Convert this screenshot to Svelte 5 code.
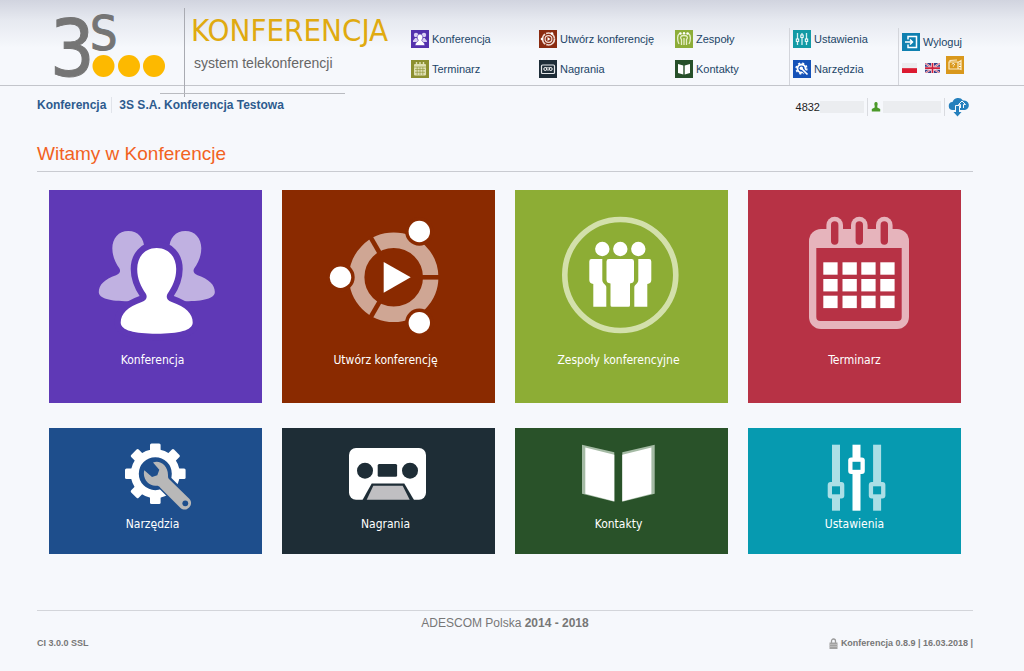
<script>
  const menu = [
    { id: 'people', label: 'Konferencja', color: '#5432ad' },
    { id: 'calendar', label: 'Terminarz', color: '#8c9030' },
    { id: 'create', label: 'Utwórz konferencję', color: '#8a2b10' },
    { id: 'tape', label: 'Nagrania', color: '#1e2d38' },
    { id: 'teams', label: 'Zespoły', color: '#8dad38' },
    { id: 'book', label: 'Kontakty', color: '#27502a' }
  ]

  const adminMenu = [
    { id: 'sliders', label: 'Ustawienia', color: '#129aa5' },
    { id: 'gear', label: 'Narzędzia', color: '#1552b8' }
  ]

  const tiles = [
    { id: 'people', label: 'Konferencja', color: '#5f39b6' },
    { id: 'create', label: 'Utwórz konferencję', color: '#8a2a00' },
    { id: 'teams', label: 'Zespoły konferencyjne', color: '#8dad35' },
    { id: 'calendar', label: 'Terminarz', color: '#b73245' },
    { id: 'gear', label: 'Narzędzia', color: '#1e4e8c', small: true },
    { id: 'tape', label: 'Nagrania', color: '#1e2d36', small: true },
    { id: 'book', label: 'Kontakty', color: '#295229', small: true },
    { id: 'sliders', label: 'Ustawienia', color: '#069ab0', small: true }
  ]

  const person = 'M107.7 58c-12 0-19.5 9-19.5 21 0 10 4 18 8.500 24.500 2 3.500 1 6.500-4 8.500-14 5-21 11.500-21 20.500 0 8 14 11.200 36 11.200s36-3.200 36-11.200c0-9-7-15.500-21-20.500-5-2-6-5-4-8.500 4.500-6.500 8.500-14.500 8.500-24.500 0-12-7.500-21-19.500-21z'
  const side = 'M76.5 69h10.800v21c0 4 4 4 4 7.500v19.200H78.300V94q-4-.5-4-4V71.400q0-2.400 2.200-2.400z'
  const teeth = [0, 45, 90, 135, 180, 225, 270, 315]
</script>

{#snippet miniIcon(id, color)}
  <svg class="mini" viewBox="0 0 18 18" style="background: {color}" aria-hidden="true">
    {#if id === 'people'}
      <g fill="#d9d0f2">
        <circle cx="5" cy="5" r="2.200" /><path d="M2 12c0-3 1.500-2 2-4h2c0 2 2 1 2 4z" />
        <circle cx="13" cy="5" r="2.200" /><path d="M10 12c0-3 2-2 2-4h2c0 2 2 1 2 4z" />
      </g>
      <g fill="#fff" stroke={color} stroke-width=".6">
        <path d="M9 4a3 3.400 0 0 0-1.800 6c.4 2-3 1.500-3 5.500h9.600c0-4-3.400-3.500-3-5.500A3 3.400 0 0 0 9 4z" />
      </g>
    {:else if id === 'calendar'}
      <rect x="3" y="4" width="12" height="11.500" rx="1" fill="#dfe0b4" />
      <path d="M5.500 2v3M9 2v3M12.500 2v3" stroke="#dfe0b4" stroke-width="1.400" />
      <path d="M3 7h12M4 9.500h10M4 12.300h10M6.200 7v8M9 7v8M11.800 7v8" stroke={color} stroke-width=".6" />
    {:else if id === 'create'}
      <g fill="none" stroke="#f1dcd5">
        <circle cx="9.500" cy="9" r="6" stroke-width="1.600" stroke-dasharray="11.500 1" />
        <circle cx="9.500" cy="9" r="3.400" stroke-width="1.200" />
      </g>
      <path d="M8.500 7l3 2-3 2z" fill="#fff" />
      <circle cx="3" cy="9" r="1.300" fill="#fff" />
      <circle cx="13" cy="3.500" r="1.300" fill="#fff" />
    {:else if id === 'tape'}
      <rect x="2.500" y="5" width="13" height="8.500" rx="1" fill="none" stroke="#e4e7e9" stroke-width="1.200" />
      <circle cx="6.300" cy="9" r="1.500" fill="none" stroke="#fff" />
      <circle cx="11.700" cy="9" r="1.500" fill="none" stroke="#fff" />
      <path d="M6.500 7.800h5M8 10h2" stroke="#fff" stroke-width=".8" />
    {:else if id === 'teams'}
      <g fill="none" stroke="#e6efc8" stroke-width="1.300">
        <path d="M5 3C2 5 2 10 4 14M13 3c3 2 3 7 1 11M6.500 15V9.500C4.500 7 6 5.500 9 5.500s4.500 1.500 2.500 4V15M9 8v7" />
      </g>
      <g fill="#fff">
        <circle cx="5.500" cy="3.500" r="1.200" /><circle cx="9" cy="3.300" r="1.200" /><circle cx="12.500" cy="3.500" r="1.200" />
      </g>
    {:else if id === 'book'}
      <path d="M3 4l5.300 1.600v9L3 13zM15 4L9.700 5.600v9L15 13z" fill="#fff" />
    {:else if id === 'sliders'}
      <path d="M4.500 3v12M9 3v12M13.500 3v12" stroke="#d5f0f2" stroke-width="1.300" />
      <g fill={color} stroke="#fff">
        <rect x="3.300" y="9" width="2.400" height="2.400" />
        <rect x="7.800" y="5" width="2.400" height="2.400" />
        <rect x="12.300" y="9" width="2.400" height="2.400" />
      </g>
    {:else if id === 'gear'}
      <circle cx="8.500" cy="8.500" r="4" fill="none" stroke="#fff" stroke-width="1.800" />
      <circle cx="8.500" cy="8.500" r="5.400" fill="none" stroke="#fff" stroke-width="1.400" stroke-dasharray="2.120 2.120" />
      <path d="M8 8l6.500 6.500" stroke={color} stroke-width="3.400" />
      <path d="M8 8l6.500 6.500" stroke="#fff" stroke-width="1.700" />
      <circle cx="8.300" cy="8.300" r="1.700" fill="#fff" />
    {:else if id === 'logout'}
      <path d="M6 6.500V3.500h8.500v11H6v-3" fill="none" stroke="#fff" stroke-width="1.500" />
      <path d="M3 9h7M8 6.500L10.500 9 8 11.500" fill="none" stroke="#fff" stroke-width="1.500" />
    {:else if id === 'help'}
      <path d="M3 6h9v7H3zM4 6V4.500l7-.5M12 6.500l3-2v9l-3-1" fill="none" stroke="#fbe9c3" stroke-width="1.200" />
      <path d="M6 8.500c0-1.300 2.500-1.300 2.500 0 0 1-1.200.8-1.200 2M13 8h2M13 10.500h2" fill="none" stroke="#fff" />
    {/if}
  </svg>
{/snippet}

{#snippet tileIcon(id, color)}
  {#if id === 'people'}
    <g fill="#c0b1e1">
      <path d={person} transform="translate(-9 -6.600) scale(.82)" />
      <path d={person} transform="translate(48 -6.600) scale(.82)" />
    </g>
    <path d={person} fill={color} stroke={color} stroke-width="13" />
    <path d={person} fill="#fff" />
  {:else if id === 'create'}
    <circle cx="111.700" cy="87.300" r="37" fill="none" stroke="#cfa694" stroke-width="15.400" />
    <g stroke={color} stroke-width="4.600">
      {#each [0, 120, 240] as angle}
        <path d="M136 87.300h23" transform="rotate({angle} 111.700 87.300)" />
      {/each}
    </g>
    <g fill="#fff" stroke={color} stroke-width="7" paint-order="stroke">
      <circle cx="137.300" cy="41.500" r="10.700" />
      <circle cx="58.500" cy="87.300" r="10.700" />
      <circle cx="137.300" cy="132.800" r="10.700" />
    </g>
    <path d="M101.700 72l27 15.300-27 15.400z" fill="#fff" />
  {:else if id === 'teams'}
    <circle cx="105.300" cy="85" r="55.500" fill="none" stroke="#d3e0ab" stroke-width="5.600" />
    <g fill="#fff">
      <circle cx="87.300" cy="59" r="7.200" />
      <circle cx="105.300" cy="59" r="7.200" />
      <circle cx="123.300" cy="59" r="7.200" />
      <path d="M94 69h22.600q2.400 0 2.400 2.400V90q0 3-4 3.500v21.700q0 1.500-1.500 1.500H97q-1.500 0-1.500-1.500V93.500q-4-.5-4-3.500V71.400q0-2.400 2.500-2.400z" />
      <path d={side} />
      <path d={side} transform="translate(210.600 0) scale(-1 1)" />
    </g>
  {:else if id === 'calendar'}
    <g fill="#e6b4bc">
      <rect x="61" y="39" width="100" height="100" rx="12" />
      {#each [86.7, 111.3, 136.3] as x}
        <rect x={x - 8.3} y="26.700" width="16.600" height="30" rx="8.300" />
      {/each}
    </g>
    <path d="M68.300 58h85.400v69q0 4-4 4H72.300q-4 0-4-4z" fill={color} />
    {#each [86.7, 111.3, 136.3] as x}
      <rect x={x - 3.7} y="31.300" width="7.400" height="23.400" rx="3.700" fill={color} />
    {/each}
    {#each [72.3, 89, 105.7] as y}
      {#each [75.3, 94.5, 113.3, 132.3] as x}
        <rect {x} {y} width="14.300" height="12.400" fill="#fff" />
      {/each}
    {/each}
  {:else if id === 'gear'}
    <circle cx="106.300" cy="45.700" r="20.500" fill="none" stroke="#fff" stroke-width="8" />
    {#each teeth as angle}
      <rect x="101" y="15.400" width="10.600" height="10" rx="1.500" fill="#fff" transform="rotate({angle} 106.300 45.700)" />
    {/each}
    <path d="M116 55l21 21" stroke={color} stroke-width="16" />
    <path
      d="M104 34.500c6-3 15 2 15 12.500 0 2 0 3 1 4l20.500 20c5 6-3 14-9 9L111.500 60c-1.500-2-2.500-2.300-4.500-2.200-7 .5-14-7-11.700-15.600l7.700 6.800 5.300-1.700 2-5.500z"
      fill="#b8b8b8"
    />
    <circle cx="136.300" cy="75.300" r="2.900" fill={color} />
  {:else if id === 'tape'}
    <rect x="67" y="20" width="77" height="51.700" rx="7" fill="#fff" />
    <g fill={color}>
      <circle cx="83" cy="42.700" r="8" />
      <circle cx="128" cy="42.700" r="8" />
      <rect x="95.700" y="36" width="19.400" height="12.800" rx="1.500" />
      <path d="M89.700 55.500h32.600l9.700 16.400H80.500z" />
    </g>
    <path d="M91.300 57.700h29.400l7 14H84.700z" fill="#c0bfc2" />
  {:else if id === 'book'}
    <path d="M67 16.700l32.300 7.600v49.400l-32.300-8zM139.700 16.700l-32.400 7.600v49.400l32.400-8z" fill="#a5bba5" />
    <path d="M70.300 19.500l29 7.200v46.600l-29-7.600zM136.400 19.500l-29.100 7.200v46.600l29.100-7.600z" fill="#fff" />
  {:else if id === 'sliders'}
    {#each [[88, 54, '#abdfe6'], [108.5, 29.5, '#fff'], [129.1, 54, '#abdfe6']] as [x, y, fill]}
      <rect x={x - 4} y="16.700" width="8" height="66" {fill} />
      <rect x={x - 8.3} {y} width="16.600" height="16.600" rx="3" {fill} />
      <rect x={x - 4} y={y + 4.3} width="8" height="8" fill={color} />
    {/each}
  {/if}
{/snippet}

<header class="header">
  <div class="brand">
    <svg class="logo" viewBox="-6 -8 122 104" role="img" aria-label="3S">
      <text x="-5" y="68" class="logo-three">3</text>
      <text x="35" y="42" class="logo-s">S</text>
      <g fill="#fdb900">
        <circle cx="48.500" cy="58" r="11" />
        <circle cx="74" cy="58" r="11" />
        <circle cx="99" cy="58" r="11" />
      </g>
    </svg>
    <div class="brand-name">
      <strong>KONFERENCJA</strong>
      <span>system telekonferencji</span>
    </div>
  </div>

  <nav class="menu">
    {#each menu as item}
      <a href="#/{item.id}">{@render miniIcon(item.id, item.color)}{item.label}</a>
    {/each}
  </nav>
  <nav class="menu admin">
    {#each adminMenu as item}
      <a href="#/{item.id}">{@render miniIcon(item.id, item.color)}{item.label}</a>
    {/each}
  </nav>
  <div class="session">
    <a href="#/logout">{@render miniIcon('logout', '#0f80b0')}Wyloguj</a>
    <div class="langs">
      <button type="button" aria-label="Polski">
        <svg viewBox="0 0 16 11">
          <path d="M0 0h16v6H0z" fill="#ececef" /><path d="M0 5.500h16V11H0z" fill="#dc1a30" />
        </svg>
      </button>
      <button type="button" aria-label="English">
        <svg viewBox="0 0 16 11">
          <path d="M0 0h16v11H0z" fill="#35408a" />
          <path d="M0 0l16 11M16 0L0 11" stroke="#f3e6ee" stroke-width="2" />
          <path d="M0 0l16 11M16 0L0 11" stroke="#d0344c" stroke-width=".8" />
          <path d="M8 0v11M0 5.500h16" stroke="#f6eef2" stroke-width="3.200" />
          <path d="M8 0v11M0 5.500h16" stroke="#d0203c" stroke-width="1.800" />
        </svg>
      </button>
      <a class="help" href="#/help" aria-label="Pomoc">{@render miniIcon('help', '#d9981c')}</a>
    </div>
  </div>
</header>

<div class="bar">
  <div class="crumbs">
    <a href="#/">Konferencja</a>
    <a href="#/company">3S S.A. Konferencja Testowa</a>
  </div>
  <div class="status">
    <div class="cell">4832<span class="blank short"></span></div>
    <div class="cell">
      <svg class="user" viewBox="0 0 10 10" aria-hidden="true">
        <path d="M5 0C3.200 0 3 2 3.700 4v1.500L.8 7v2.500h8.400V7L6.300 5.500V4C7 2 6.800 0 5 0z" fill="#4c9a2a" />
      </svg>
      <span class="blank"></span>
    </div>
    <div class="cell">
      <a class="cloud" href="#/download" aria-label="Pobierz">
        <svg viewBox="0 0 22 20">
          <path d="M5 13a4 4 0 0 1-.5-8A6 6 0 0 1 15 3.500 4.800 4.800 0 0 1 17 13z" fill="#2580bd" />
          <path d="M8 8.500h3V15h2.500l-4 4.500-4-4.500H8z" fill="#2580bd" />
          <path d="M7.500 14V8.500h4V14M12.500 11V7.500h-2L14 4l3.500 3.500h-2V11" fill="none" stroke="#f6f8fc" />
        </svg>
      </a>
    </div>
  </div>
</div>

<main>
  <h1>Witamy w Konferencje</h1>
  <div class="tiles">
    {#each tiles as tile}
      <a class="tile" class:small={tile.small} href="#/{tile.id}" style="background: {tile.color}">
        <svg viewBox={tile.small ? '0 0 213 86' : '0 0 213 160'} aria-hidden="true">
          {@render tileIcon(tile.id, tile.color)}
        </svg>
        <span>{tile.label}</span>
      </a>
    {/each}
  </div>
</main>

<footer>
  <p>ADESCOM Polska <strong>2014 - 2018</strong></p>
  <div class="versions">
    <span>CI 3.0.0 SSL</span>
    <span>
      <svg class="lock" viewBox="0 0 9 11" aria-hidden="true">
        <path d="M2.500 5V3a2 2 0 0 1 4 0v2" fill="none" stroke="#999" stroke-width="1.300" />
        <path d="M.5 4.500h8V11h-8z" fill="#a2a2a2" />
        <path d="M.5 6.500h8M.5 8.500h8" stroke="#c4c4c4" stroke-width=".7" />
      </svg>
      Konferencja 0.8.9 | 16.03.2018 |
    </span>
  </div>
</footer>

<style>
:global(body) {
	margin: 0;
	background: #f6f8fc;
	font-family: "Liberation Sans", Arial, sans-serif;
	font-size: 12px;
	color: #666;
}

a {
	color: inherit;
	text-decoration: none;
}

svg {
	display: block;
}

.header {
	display: flex;
	height: 85px;
	border-bottom: 1px solid #c3c5cb;
	background: linear-gradient(#d1d4df, #e6e9f0 20px, #f6f8fc 48px);
}

.brand {
	display: flex;
	flex: none;
	width: 362px;
	padding-left: 49px;
}

.logo {
	flex: none;
	width: 122px;
	height: 104px;
	margin-right: 13px;
}

.logo-three,
.logo-s {
	font-family: "DejaVu Sans Condensed", "DejaVu Sans", sans-serif;
	fill: #757575;
	stroke: #757575;
}

.logo-three {
	font-size: 78px;
}

.logo-s {
	font-size: 48px;
}

.brand-name {
	position: relative;
	padding: 10px 0 0 7px;
}

.brand-name::before {
	content: '';
	position: absolute;
	left: 0;
	top: 8px;
	height: 89px;
	border-left: 1px solid #a9abb2;
}

.brand-name::after {
	content: '';
	position: absolute;
	left: -24px;
	top: 93px;
	width: 185px;
	border-top: 1px solid #b9bbc0;
}

.brand-name strong {
	display: block;
	font-family: "DejaVu Sans Condensed", "DejaVu Sans", sans-serif;
	font-size: 31px;
	font-weight: 400;
	line-height: 40px;
	color: #e0aa10;
}

.brand-name span {
	display: block;
	padding: 2px 0 0 3px;
	font-size: 14px;
	line-height: 22px;
}

.menu {
	display: grid;
	flex: 1;
	grid-template: 18px 18px / 128fr 136fr 114fr;
	grid-auto-flow: column;
	row-gap: 12px;
	padding-top: 30px;
}

.menu a,
.session > a {
	display: flex;
	align-items: center;
	gap: 3px;
	font-size: 11px;
	color: #1c4567;
	white-space: nowrap;
}

.mini {
	flex: none;
	width: 18px;
	height: 18px;
}

.menu.admin {
	flex: none;
	grid-template-columns: 105px;
	padding: 2px 0 0 3px;
	margin-top: 28px;
	border-left: 1px solid #d3d5db;
}

.session {
	flex: none;
	width: 122px;
	margin-top: 28px;
	padding: 5px 0 0 3px;
	border-left: 1px solid #d3d5db;
}

.langs {
	display: flex;
	align-items: center;
	gap: 8px;
	height: 32px;
}

.langs button {
	width: 15px;
	margin: 2px 0 0;
	padding: 0;
	border: 0;
	background: none;
	cursor: pointer;
}

.langs .help {
	margin: -4px 0 0 -2px;
}

.bar {
	display: flex;
	justify-content: space-between;
	height: 38px;
	margin: 0 51px 0 37px;
}

.crumbs {
	display: flex;
	align-items: flex-start;
	padding-top: 11px;
	font-weight: bold;
	line-height: 16px;
	color: #2d5b8e;
}

.crumbs a + a {
	margin-left: 5px;
	padding-left: 7px;
	border-left: 1px solid #e1e4ea;
}

.status {
	display: flex;
	padding: 12px 3px 0 0;
	font-size: 11px;
	line-height: 18px;
	color: #222;
}

.cell {
	display: flex;
	align-items: center;
	gap: 2px;
	height: 18px;
}

.cell + .cell {
	margin-left: 3px;
	padding-left: 3px;
	border-left: 1px solid #d9dbe0;
}

.blank {
	width: 58px;
	height: 12px;
	background: #ebedf0;
}

.blank.short {
	width: 44px;
	margin-left: -2px;
}

.user {
	width: 10px;
	height: 10px;
}

.cloud svg {
	width: 22px;
	height: 20px;
}

main {
	margin: 0 51px 0 37px;
}

h1 {
	margin: 0;
	padding: 18px 0 5px;
	border-bottom: 1px solid #c9cbd1;
	font-size: 19px;
	font-weight: 400;
	line-height: 24px;
	color: #f2621f;
}

.tiles {
	display: grid;
	grid-template-columns: repeat(4, 1fr);
	gap: 25px 20px;
	padding: 18px 12px 0;
}

.tile {
	aspect-ratio: 1;
	font-family: "DejaVu Sans Condensed", "Open Sans", sans-serif;
	font-size: 12px;
	line-height: 20px;
	text-align: center;
	color: #fff;
}

.tile.small {
	aspect-ratio: 213 / 126;
}

.tile svg {
	width: 100%;
}

.tile span {
	display: block;
	padding-right: 6px;
}

.tile:nth-child(4n) span {
	padding-right: 0;
}

footer {
	margin: 56px 51px 0 37px;
	border-top: 1px solid #d3d5da;
	color: #777;
}

footer p {
	margin: 0;
	padding-top: 3px;
	line-height: 18px;
	text-align: center;
}

.versions {
	display: flex;
	justify-content: space-between;
	padding: 4px 0 20px;
	font-size: 9px;
	font-weight: bold;
	line-height: 14px;
}

.versions span {
	display: flex;
	align-items: center;
	gap: 3px;
}

.lock {
	width: 9px;
	height: 11px;
}
</style>
